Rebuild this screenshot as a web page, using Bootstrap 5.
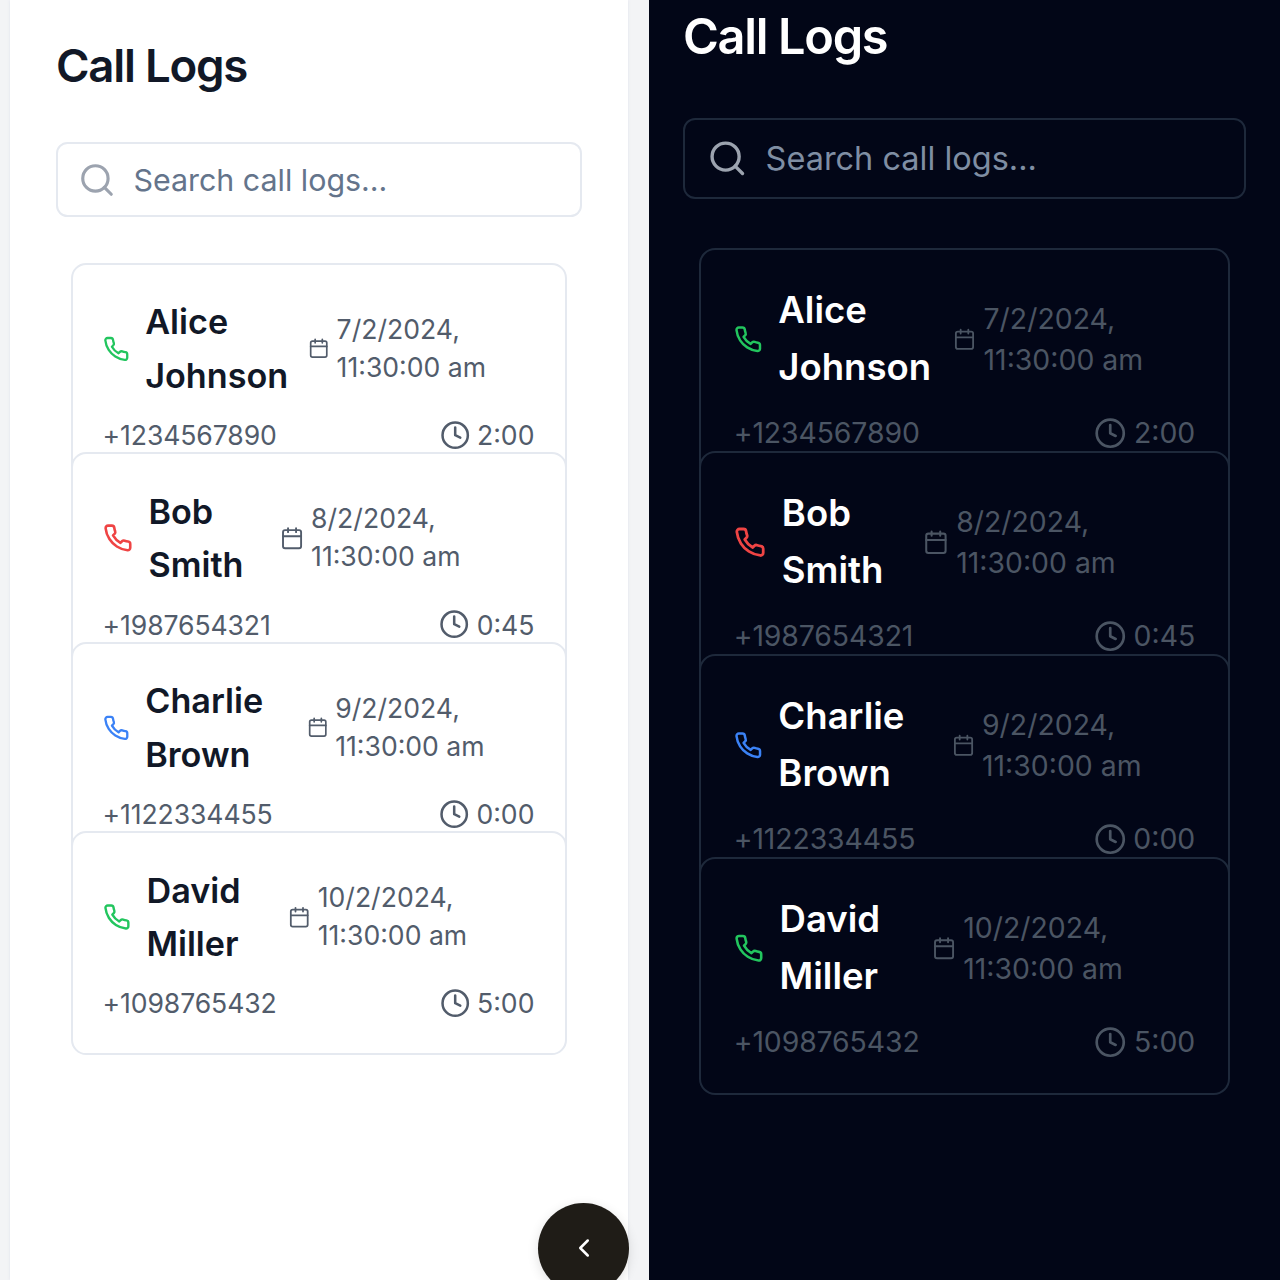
<!DOCTYPE html>
<html lang="en">
<head>
    <meta charset="UTF-8">
    <meta name="viewport" content="width=device-width, initial-scale=1.0">
    <title>Call Logs</title>
    <link href="https://cdn.jsdelivr.net/npm/bootstrap@5.3.0/dist/css/bootstrap.min.css" rel="stylesheet">
    <style>
        html, body { height: 1280px; overflow: hidden; }
        body { background: #f3f4f6; font-family: "Inter", "Liberation Sans", sans-serif; }
        svg { fill: none; stroke: currentColor; stroke-width: 2; stroke-linecap: round; stroke-linejoin: round; }

        .screens { height: 1280px; }
        .pane { box-sizing: border-box; height: 1280px; }
        .pane-light {
            --s: 1.9px; --pane-bg: #fff; --line: #e5e9f0; --title: #111827; --muted: #525c6b; --hint: #64748b;
            --lap: -17.8; --foot: 7.5; --when-nudge: -2px; --title-gap: 24; --search-h: 39.5; --list-top: 24; --inset: 1px;
            width: 618px; margin-left: 10px; margin-right: 21px; padding: 36px 46px 0;
            background: var(--pane-bg); box-shadow: 0 0 3px #dfe3ec;
        }
        .pane-dark {
            --s: 2.03px; --pane-bg: #020617; --line: #1e293b; --title: #fff; --muted: #4b5563; --hint: #7f8ea3;
            --lap: -17.5; --foot: 8.3; --when-nudge: 2px; --title-gap: 23.5; --search-h: 39.9; --list-top: 24.1; --inset: 0px;
            width: 631px; padding: 5px 34px 0; background: var(--pane-bg);
        }
        .pane-title { margin: 0 0 calc(var(--s) * var(--title-gap)); color: var(--title); font-size: calc(var(--s) * 24); line-height: calc(var(--s) * 32); font-weight: 600; letter-spacing: -.027em; }
        .search-box { height: calc(var(--s) * var(--search-h)); margin-top: 1px; border: 2px solid var(--line); border-radius: calc(var(--s) * 6); padding-left: calc(var(--s) * 10.7); gap: calc(var(--s) * 9); }
        .search-box svg { width: calc(var(--s) * 20); height: calc(var(--s) * 20); flex: none; color: #9ca3af; }
        .search-box .form-control { padding: 2px 0 0; border: 0; border-radius: 0; background: transparent; box-shadow: none; font-size: calc(var(--s) * 16); color: var(--title); }
        .search-box .form-control::placeholder { color: var(--hint); opacity: 1; }

        .log-list { padding: calc(var(--s) * var(--list-top)) calc(var(--s) * 8) 0; }
        .log-item { position: relative; height: calc(var(--s) * 117.5); margin-top: calc(var(--s) * var(--lap)); padding: calc(var(--s) * 16); padding-left: calc(var(--s) * 16 - var(--inset)); background: var(--pane-bg); border: 2px solid var(--line); border-radius: calc(var(--s) * 8); }
        .log-item:first-child { margin-top: 0; }
        .call-icon { width: calc(var(--s) * 20); height: calc(var(--s) * 20); stroke-width: 2.1; }
        .who { font-size: calc(var(--s) * 18); line-height: calc(var(--s) * 28); font-weight: 600; color: var(--title); }
        .when, .phone-no, .length { font-size: calc(var(--s) * 14); line-height: calc(var(--s) * 20); color: var(--muted); }
        .phone-no { letter-spacing: -.004em; }
        .when svg { width: calc(var(--s) * 16); height: calc(var(--s) * 16); stroke-width: 1.9; }
        .when span { margin-top: var(--when-nudge); }
        .length svg { width: calc(var(--s) * 16); height: calc(var(--s) * 16); flex: none; }
        .log-foot { margin-top: calc(var(--s) * var(--foot)); }
        .gap-wide { gap: calc(var(--s) * 8 + var(--inset)); }
        .gap-thin { gap: calc(var(--s) * 3.6); }
        .ok { color: #22c55e; }
        .missed { color: #ef4444; }
        .out { color: #3b82f6; }

        .back-btn { position: absolute; left: 538px; top: 1203px; width: 91px; height: 91px; padding: 0; border: 0; border-radius: 50%; background: #1f1c17; color: #fff; box-shadow: 0 3px 12px rgba(0,0,0,.12); }
        .back-btn svg { width: 30px; height: 30px; margin-top: -2px; }
    </style>
</head>
<body>
    <svg width="0" height="0" class="position-absolute">
        <symbol id="i-phone" viewBox="0 0 24 24"><path d="M22 16.92v3a2 2 0 0 1-2.18 2 19.79 19.79 0 0 1-8.63-3.07 19.5 19.5 0 0 1-6-6 19.79 19.79 0 0 1-3.07-8.67A2 2 0 0 1 4.11 2h3a2 2 0 0 1 2 1.72 12.84 12.84 0 0 0 .7 2.81 2 2 0 0 1-.45 2.11L8.09 9.91a16 16 0 0 0 6 6l1.27-1.27a2 2 0 0 1 2.11-.45 12.84 12.84 0 0 0 2.81.7A2 2 0 0 1 22 16.92z"/></symbol>
        <symbol id="i-cal" viewBox="0 0 24 24"><rect x="3" y="4" width="18" height="18" rx="2"/><path d="M16 2v4M8 2v4M3 10h18"/></symbol>
        <symbol id="i-clock" viewBox="0 0 24 24"><circle cx="12" cy="12" r="10"/><path d="M12 6v6l4 2"/></symbol>
        <symbol id="i-search" viewBox="0 0 24 24"><circle cx="11" cy="11" r="8"/><path d="m21 21-4.35-4.35"/></symbol>
    </svg>

    <div class="screens d-flex position-relative">
        <!-- Light -->
        <section class="pane pane-light">
            <h1 class="pane-title">Call Logs</h1>
            <div class="search-box d-flex align-items-center">
                <svg><use href="#i-search"/></svg>
                <input type="text" class="form-control" placeholder="Search call logs...">
            </div>
            <div class="log-list">
                <div class="log-item">
                    <div class="d-flex justify-content-between align-items-center">
                        <div class="d-flex align-items-center gap-wide"><svg class="call-icon ok"><use href="#i-phone"/></svg><span class="who">Alice Johnson</span></div>
                        <div class="when d-flex align-items-center gap-thin"><svg><use href="#i-cal"/></svg><span>7/2/2024, 11:30:00 am</span></div>
                    </div>
                    <div class="log-foot d-flex justify-content-between align-items-center">
                        <span class="phone-no">+1234567890</span>
                        <span class="length d-flex align-items-center gap-thin"><svg><use href="#i-clock"/></svg>2:00</span>
                    </div>
                </div>
                <div class="log-item">
                    <div class="d-flex justify-content-between align-items-center">
                        <div class="d-flex align-items-center gap-wide"><svg class="call-icon missed"><use href="#i-phone"/></svg><span class="who">Bob Smith</span></div>
                        <div class="when d-flex align-items-center gap-thin"><svg><use href="#i-cal"/></svg><span>8/2/2024, 11:30:00 am</span></div>
                    </div>
                    <div class="log-foot d-flex justify-content-between align-items-center">
                        <span class="phone-no">+1987654321</span>
                        <span class="length d-flex align-items-center gap-thin"><svg><use href="#i-clock"/></svg>0:45</span>
                    </div>
                </div>
                <div class="log-item">
                    <div class="d-flex justify-content-between align-items-center">
                        <div class="d-flex align-items-center gap-wide"><svg class="call-icon out"><use href="#i-phone"/></svg><span class="who">Charlie Brown</span></div>
                        <div class="when d-flex align-items-center gap-thin"><svg><use href="#i-cal"/></svg><span>9/2/2024, 11:30:00 am</span></div>
                    </div>
                    <div class="log-foot d-flex justify-content-between align-items-center">
                        <span class="phone-no">+1122334455</span>
                        <span class="length d-flex align-items-center gap-thin"><svg><use href="#i-clock"/></svg>0:00</span>
                    </div>
                </div>
                <div class="log-item">
                    <div class="d-flex justify-content-between align-items-center">
                        <div class="d-flex align-items-center gap-wide"><svg class="call-icon ok"><use href="#i-phone"/></svg><span class="who">David Miller</span></div>
                        <div class="when d-flex align-items-center gap-thin"><svg><use href="#i-cal"/></svg><span>10/2/2024, 11:30:00 am</span></div>
                    </div>
                    <div class="log-foot d-flex justify-content-between align-items-center">
                        <span class="phone-no">+1098765432</span>
                        <span class="length d-flex align-items-center gap-thin"><svg><use href="#i-clock"/></svg>5:00</span>
                    </div>
                </div>
            </div>
        </section>

        <!-- Dark -->
        <section class="pane pane-dark">
            <h1 class="pane-title">Call Logs</h1>
            <div class="search-box d-flex align-items-center">
                <svg><use href="#i-search"/></svg>
                <input type="text" class="form-control" placeholder="Search call logs...">
            </div>
            <div class="log-list">
                <div class="log-item">
                    <div class="d-flex justify-content-between align-items-center">
                        <div class="d-flex align-items-center gap-wide"><svg class="call-icon ok"><use href="#i-phone"/></svg><span class="who">Alice Johnson</span></div>
                        <div class="when d-flex align-items-center gap-thin"><svg><use href="#i-cal"/></svg><span>7/2/2024, 11:30:00 am</span></div>
                    </div>
                    <div class="log-foot d-flex justify-content-between align-items-center">
                        <span class="phone-no">+1234567890</span>
                        <span class="length d-flex align-items-center gap-thin"><svg><use href="#i-clock"/></svg>2:00</span>
                    </div>
                </div>
                <div class="log-item">
                    <div class="d-flex justify-content-between align-items-center">
                        <div class="d-flex align-items-center gap-wide"><svg class="call-icon missed"><use href="#i-phone"/></svg><span class="who">Bob Smith</span></div>
                        <div class="when d-flex align-items-center gap-thin"><svg><use href="#i-cal"/></svg><span>8/2/2024, 11:30:00 am</span></div>
                    </div>
                    <div class="log-foot d-flex justify-content-between align-items-center">
                        <span class="phone-no">+1987654321</span>
                        <span class="length d-flex align-items-center gap-thin"><svg><use href="#i-clock"/></svg>0:45</span>
                    </div>
                </div>
                <div class="log-item">
                    <div class="d-flex justify-content-between align-items-center">
                        <div class="d-flex align-items-center gap-wide"><svg class="call-icon out"><use href="#i-phone"/></svg><span class="who">Charlie Brown</span></div>
                        <div class="when d-flex align-items-center gap-thin"><svg><use href="#i-cal"/></svg><span>9/2/2024, 11:30:00 am</span></div>
                    </div>
                    <div class="log-foot d-flex justify-content-between align-items-center">
                        <span class="phone-no">+1122334455</span>
                        <span class="length d-flex align-items-center gap-thin"><svg><use href="#i-clock"/></svg>0:00</span>
                    </div>
                </div>
                <div class="log-item">
                    <div class="d-flex justify-content-between align-items-center">
                        <div class="d-flex align-items-center gap-wide"><svg class="call-icon ok"><use href="#i-phone"/></svg><span class="who">David Miller</span></div>
                        <div class="when d-flex align-items-center gap-thin"><svg><use href="#i-cal"/></svg><span>10/2/2024, 11:30:00 am</span></div>
                    </div>
                    <div class="log-foot d-flex justify-content-between align-items-center">
                        <span class="phone-no">+1098765432</span>
                        <span class="length d-flex align-items-center gap-thin"><svg><use href="#i-clock"/></svg>5:00</span>
                    </div>
                </div>
            </div>
        </section>

        <button class="back-btn d-flex align-items-center justify-content-center" type="button" aria-label="Back">
            <svg viewBox="0 0 24 24"><path d="m15 18-6-6 6-6"/></svg>
        </button>
    </div>

    <script src="https://cdn.jsdelivr.net/npm/bootstrap@5.3.0/dist/js/bootstrap.bundle.min.js"></script>
</body>
</html>
